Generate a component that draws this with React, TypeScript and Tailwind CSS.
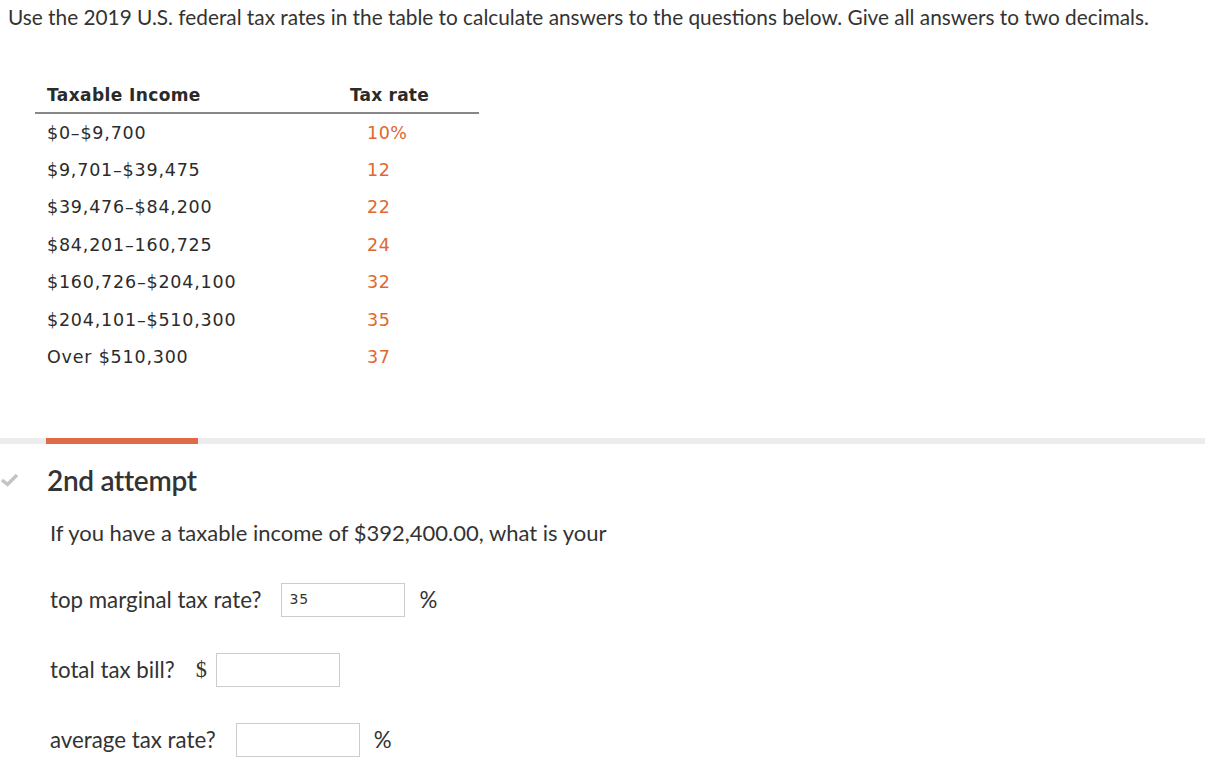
import React from "react";

const rows: [string, string][] = [
  ["$0–$9,700", "10%"],
  ["$9,701–$39,475", "12"],
  ["$39,476–$84,200", "22"],
  ["$84,201–160,725", "24"],
  ["$160,726–$204,100", "32"],
  ["$204,101–$510,300", "35"],
  ["Over $510,300", "37"],
];

export default function App() {
  return (
    <div className="w-[1205px] h-[772px] bg-white text-[#333] overflow-hidden" style={{ fontFamily: "Lato, 'Liberation Sans', sans-serif" }}>
      <p className="pl-[8px] pt-[4px] text-[20.8px] leading-[26px] text-[#333] whitespace-nowrap">
        Use the 2019 U.S. federal tax rates in the table to calculate answers to the questions below. Give all answers to two decimals.
      </p>

      <div className="ml-[35px] mt-[50px] w-[444px]" style={{ fontFamily: "'DejaVu Sans', 'Liberation Sans', sans-serif" }}>
        <div className="flex h-[34px] items-center border-b-2 border-[#888] font-bold text-[17px] text-[#2a2a2a]">
          <div className="pl-[12px] w-[315px] tracking-[0.4px]">Taxable Income</div>
          <div className="tracking-[0.2px]">Tax rate</div>
        </div>
        {rows.map(([inc, rate]) => (
          <div key={inc} className="flex h-[37.4px] items-center text-[17.5px]">
            <div className="pl-[12px] w-[332px] text-[#2b2b2b] tracking-[0.8px]">{inc}</div>
            <div className="text-[#e0672f] tracking-[0.5px]">{rate}</div>
          </div>
        ))}
      </div>

      <div className="mt-[62px] h-[6px] bg-[#ececec] w-full">
        <div className="ml-[46px] w-[152px] h-[6px] bg-[#e06a45]" />
      </div>

      <div className="flex items-center mt-[18px] h-[36px]">
        <svg width="20" height="16" viewBox="0 0 20 16" className="mr-[27px]">
          <path d="M2 8 L7.5 12.5 L17 3" fill="none" stroke="#c4c4c4" strokeWidth="3.5" />
        </svg>
        <h2 className="text-[28px] font-semibold text-[#333] tracking-[-0.3px]">2nd attempt</h2>
      </div>

      <p className="ml-[50px] mt-[21px] text-[22px] leading-[28px]">If you have a taxable income of $392,400.00, what is your</p>

      <div className="ml-[50px] mt-[36px] flex items-center h-[34px] text-[22.3px]">
        <span>top marginal tax rate?</span>
        <div className="ml-[20px] w-[124px] h-[34px] border border-[#ccc] flex items-center pl-[7px] text-[14px] tracking-[1px]" style={{ fontFamily: "'DejaVu Sans', sans-serif" }}>35</div>
        <span className="ml-[14px]">%</span>
      </div>

      <div className="ml-[50px] mt-[36px] flex items-center h-[34px] text-[22.3px]">
        <span>total tax bill?</span>
        <span className="ml-[21px]" style={{ fontFamily: "'Liberation Serif', serif" }}>$</span>
        <div className="ml-[9px] w-[124px] h-[34px] border border-[#ccc]" />
      </div>

      <div className="ml-[50px] mt-[36px] flex items-center h-[34px] text-[22.3px]">
        <span>average tax rate?</span>
        <div className="ml-[20px] w-[124px] h-[34px] border border-[#ccc]" />
        <span className="ml-[14px]">%</span>
      </div>
    </div>
  );
}
